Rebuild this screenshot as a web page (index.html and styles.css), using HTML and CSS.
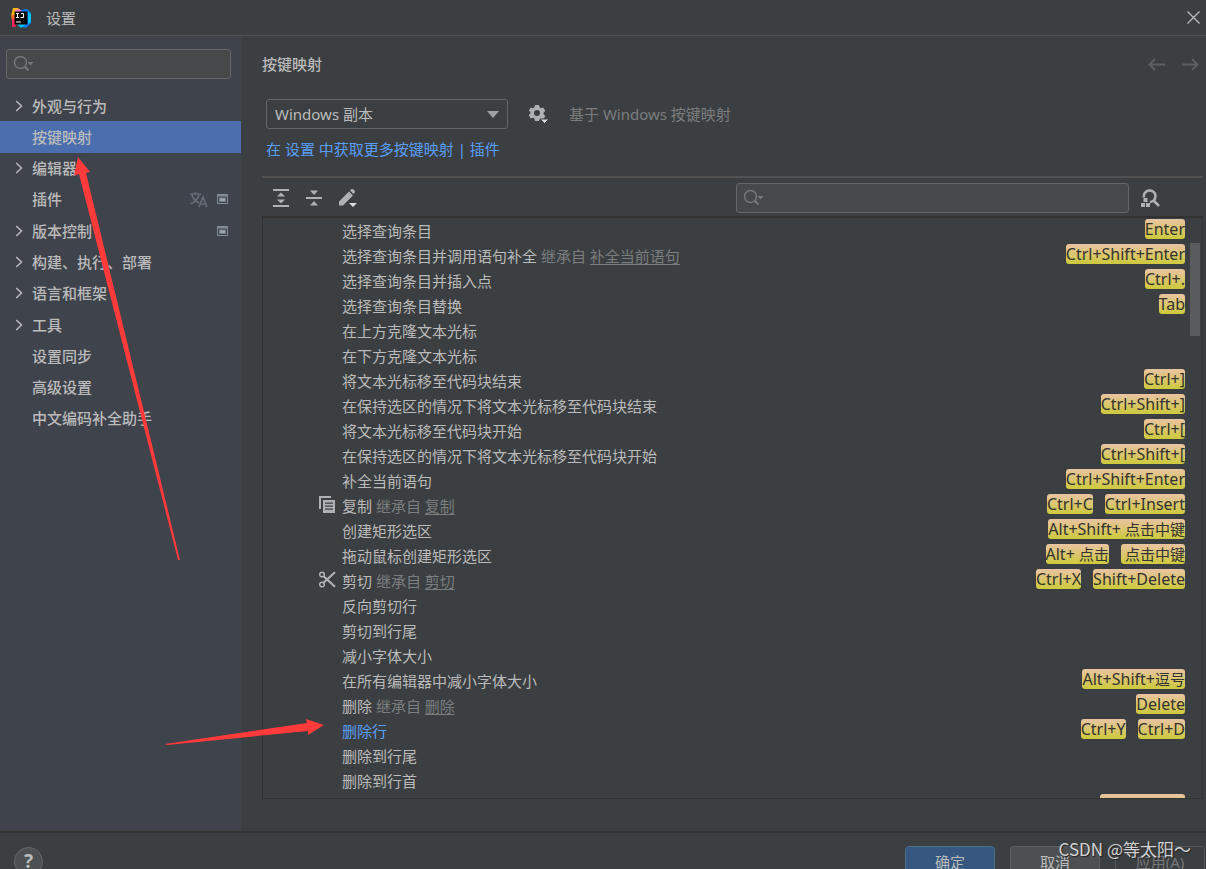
FILE: index.html
```html
<!DOCTYPE html>
<html lang="zh-CN">
<head>
<meta charset="utf-8">
<title>设置</title>
<link rel="stylesheet" href="styles.css">
</head>
<body>
<svg class="defs" aria-hidden="true">
  <symbol id="search" viewBox="0 0 22 18"><circle cx="7.5" cy="7.5" r="6" fill="none" stroke="currentColor" stroke-width="1.4"/><path d="M11.8 11.8 15.5 15.5" stroke="currentColor" stroke-width="2"/><path d="M14.500 7h6l-3 3.400z" fill="currentColor"/></symbol>
  <symbol id="chevron" viewBox="0 0 8 12"><path d="M1.200 1 6.500 6l-5.300 5" fill="none" stroke="currentColor" stroke-width="1.600"/></symbol>
  <symbol id="project" viewBox="0 0 11 10"><path d="M0 0h11v10H0zM1 2.500v6.500h9V2.500z" fill="#818c96" fill-rule="evenodd"/><path d="M2 3.500h7v4.500H2z" fill="#727c86"/><path d="M3 4.200h5v2.800H3z" fill="#9ba5ae"/></symbol>
</svg>
<div class="app">
  <header class="titlebar">
    <svg class="logo" viewBox="0 0 20 20" aria-hidden="true"><path d="M2 0h5l3 3-4 8-6-3z" fill="#fdb60d"/><path d="M0 7h7v7l-6-1z" fill="#f36a2d"/><path d="M1 11h8l-5 8-3 0z" fill="#fe2857"/><path d="M4 2l4-1 5 3-7 6z" fill="#f77ccb"/><path d="M10 2l6-1 4 4v10l-5 5-8-2z" fill="#087cfa"/><path d="M17 4l3 2v8l-3 2z" fill="#07c3f2"/><path d="M6 16h9l-5 4z" fill="#07c3f2"/><path d="M3.500 3.500h13v13h-13z" fill="#080808"/><path d="M5 5.500h3M6.500 5.500v4M5 9.500h3M10 5.500h2.500v4h-3M5 14h5" fill="none" stroke="#fff"/></svg>
    <h1 class="window-title">设置</h1>
    <button class="icon-btn close" aria-label="关闭"><svg width="13" height="13" viewBox="0 0 13 13"><path d="M.5.5l12 12M12.500.5l-12 12" stroke="#bbb" stroke-width="1.300"/></svg></button>
  </header>
  <div class="body">
    <aside class="sidebar">
      <label class="search"><svg class="search-icon"><use href="#search"/></svg><input type="text" aria-label="搜索设置"></label>
      <nav>
        <ul class="menu">
          <li><a href="#"><svg class="chevron"><use href="#chevron"/></svg>外观与行为</a></li>
          <li><a href="#" class="selected" aria-current="page">按键映射</a></li>
          <li><a href="#"><svg class="chevron"><use href="#chevron"/></svg>编辑器</a></li>
          <li><a href="#">插件<span class="marks"><svg width="18" height="17" viewBox="0 0 18 17" fill="none" stroke="#656c74" stroke-width="1.700"><path d="M0 3h11M5.500 1v2M2 4c1 3.500 4 6.500 7 8M9 4c-1 4-4 7-8.500 9M9 16l4-10 4 10M10.500 13h5"/></svg><svg class="project"><use href="#project"/></svg></span></a></li>
          <li><a href="#"><svg class="chevron"><use href="#chevron"/></svg>版本控制<span class="marks"><svg class="project"><use href="#project"/></svg></span></a></li>
          <li><a href="#"><svg class="chevron"><use href="#chevron"/></svg>构建、执行、部署</a></li>
          <li><a href="#"><svg class="chevron"><use href="#chevron"/></svg>语言和框架</a></li>
          <li><a href="#"><svg class="chevron"><use href="#chevron"/></svg>工具</a></li>
          <li><a href="#">设置同步</a></li>
          <li><a href="#">高级设置</a></li>
          <li><a href="#">中文编码补全助手</a></li>
        </ul>
      </nav>
    </aside>
    <main class="content">
      <div class="heading">
        <h2>按键映射</h2>
        <div class="history">
          <button class="icon-btn" aria-label="后退"><svg width="17" height="13" viewBox="0 0 17 13"><path d="M7 1 1.500 6.500 7 12M2 6.500h15" fill="none" stroke="#5c5e60" stroke-width="2"/></svg></button>
          <button class="icon-btn" aria-label="前进"><svg width="17" height="13" viewBox="0 0 17 13"><path d="M10 1l5.500 5.500L10 12M15 6.500H0" fill="none" stroke="#5c5e60" stroke-width="2"/></svg></button>
        </div>
      </div>
      <div class="scheme">
        <div class="select-wrap">
          <select aria-label="按键映射方案"><option>Windows 副本</option></select>
          <svg class="select-arrow" width="12" height="7" viewBox="0 0 12 7"><path d="M0 0h12L6 7z" fill="#9fa1a3"/></svg>
        </div>
        <button class="icon-btn" aria-label="方案操作"><svg width="21" height="20" viewBox="0 0 21 20"><path d="M7 1h4l.5 2.300 1.600.9 2.200-.7 2 3.400-1.700 1.600v1.900l1.700 1.600-2 3.400-2.200-.7-1.600.9L11 17H7l-.5-2.300-1.600-.9-2.200.7-2-3.400 1.700-1.600V7.600L.7 6.900l2-3.400 2.200.7 1.600-.9zM9 6a3 3 0 1 0 0 6 3 3 0 0 0 0-6z" fill="#afb1b3" fill-rule="evenodd"/><path d="M12 15h9l-4.500 4.500z" fill="#d8d8d8" stroke="#3c3f41"/></svg></button>
        <span class="based-on">基于 Windows 按键映射</span>
      </div>
      <p class="more"><a href="#">在 设置 中获取更多按键映射 | 插件</a></p>
      <div class="toolbar">
        <button class="icon-btn" aria-label="全部展开"><svg width="16" height="18" viewBox="0 0 16 18" fill="#afb1b3"><path d="M0 0h16v2H0zM0 16h16v2H0zM8 3.500l4 4H4zM8 14.500l4-4H4z"/></svg></button>
        <button class="icon-btn" aria-label="全部折叠"><svg width="16" height="18" viewBox="0 0 16 18" fill="#afb1b3"><path d="M0 8h16v2H0zM8 6l4-4.500H4zM8 12l4 4.500H4z"/></svg></button>
        <button class="icon-btn" aria-label="编辑快捷键"><svg width="18" height="18" viewBox="0 0 18 18"><path d="M0 12.500 10 2.500l4 4-10 10H0zM11 1.500l1-1c1-1 2-.5 3 .5s1.500 2 .5 3l-1 1z" fill="#afb1b3"/><path d="M10 14h8l-4 4z" fill="#ddd"/></svg></button>
        <label class="search shortcut-search"><svg class="search-icon"><use href="#search"/></svg><input type="text" aria-label="搜索操作"></label>
        <button class="icon-btn" aria-label="按快捷键查找"><svg width="19" height="18" viewBox="0 0 19 18"><path d="M3 8.500A5.800 5.800 0 1 1 9 13M12.500 11.500 18 17" fill="none" stroke="#afb1b3" stroke-width="2.500"/><path d="M2.500 9h4v4h-4zM0 14h4v4H0zM5 14h4v4H5z" fill="#afb1b3"/></svg></button>
      </div>
      <div class="actions">
        <ul class="rows">
          <li><span class="name">选择查询条目</span><kbd>Enter</kbd></li>
          <li><span class="name">选择查询条目并调用语句补全 <i>继承自 <a href="#">补全当前语句</a></i></span><kbd>Ctrl+Shift+Enter</kbd></li>
          <li><span class="name">选择查询条目并插入点</span><kbd>Ctrl+.</kbd></li>
          <li><span class="name">选择查询条目替换</span><kbd>Tab</kbd></li>
          <li><span class="name">在上方克隆文本光标</span></li>
          <li><span class="name">在下方克隆文本光标</span></li>
          <li><span class="name">将文本光标移至代码块结束</span><kbd>Ctrl+]</kbd></li>
          <li><span class="name">在保持选区的情况下将文本光标移至代码块结束</span><kbd>Ctrl+Shift+]</kbd></li>
          <li><span class="name">将文本光标移至代码块开始</span><kbd>Ctrl+[</kbd></li>
          <li><span class="name">在保持选区的情况下将文本光标移至代码块开始</span><kbd>Ctrl+Shift+[</kbd></li>
          <li><span class="name">补全当前语句</span><kbd>Ctrl+Shift+Enter</kbd></li>
          <li><svg class="row-icon" viewBox="0 0 17 17"><path d="M0 0h12v2H2v11H0z" fill="#afb1b3"/><path d="M4 4h12v13H4zM6 6.500v1.200h8V6.500zM6 9.500v1.200h8V9.500zM6 12.500v1.200h8v-1.200z" fill="#afb1b3" fill-rule="evenodd"/></svg><span class="name">复制 <i>继承自 <a href="#">复制</a></i></span><kbd>Ctrl+C</kbd><kbd>Ctrl+Insert</kbd></li>
          <li><span class="name">创建矩形选区</span><kbd>Alt+Shift+ <span>点击中键</span></kbd></li>
          <li><span class="name">拖动鼠标创建矩形选区</span><kbd>Alt+ <span>点击</span></kbd><kbd class="mouse"><span>点击中键</span></kbd></li>
          <li><svg class="row-icon" viewBox="0 0 17 17" fill="none" stroke="#afb1b3"><circle cx="3" cy="3.500" r="2.300" stroke-width="1.500"/><circle cx="3" cy="13.500" r="2.300" stroke-width="1.500"/><path d="M4.500 5.200 16 15.800M4.500 11.800 16 1.200" stroke-width="2.200"/></svg><span class="name">剪切 <i>继承自 <a href="#">剪切</a></i></span><kbd>Ctrl+X</kbd><kbd>Shift+Delete</kbd></li>
          <li><span class="name">反向剪切行</span></li>
          <li><span class="name">剪切到行尾</span></li>
          <li><span class="name">减小字体大小</span></li>
          <li><span class="name">在所有编辑器中减小字体大小</span><kbd>Alt+Shift+<span>逗号</span></kbd></li>
          <li><span class="name">删除 <i>继承自 <a href="#">删除</a></i></span><kbd>Delete</kbd></li>
          <li><span class="name changed">删除行</span><kbd>Ctrl+Y</kbd><kbd>Ctrl+D</kbd></li>
          <li><span class="name">删除到行尾</span></li>
          <li><span class="name">删除到行首</span></li>
          <li><span class="name"></span><kbd class="partial"></kbd></li>
        </ul>
        <div class="thumb"></div>
      </div>
    </main>
  </div>
  <footer class="footer">
    <button class="help" aria-label="帮助">?</button>
    <button class="btn primary">确定</button>
    <button class="btn">取消</button>
    <button class="btn disabled" disabled>应用(A)</button>
  </footer>
  <svg class="arrows" viewBox="0 0 1206 869" aria-hidden="true"><path d="M78 157 90 172 86 173 180 560 178 560 79 174 74 175.500z" fill="#ff3a3a"/><path d="M165 744 307 723 306 719 324 725 308 735 308 731 167 745z" fill="#ff3a3a"/></svg>
  <div class="watermark">CSDN @等太阳～</div>
</div>
</body>
</html>
```
FILE: styles.css
```css
* { box-sizing: border-box; }
body {
  margin: 0;
  background: #3c3f41;
  color: #bbbbbb;
  font: 15px/20px "Noto Sans", "Noto Sans CJK SC", sans-serif;
}
ul { list-style: none; margin: 0; padding: 0; }
h1, h2, p { margin: 0; font-size: 15px; }
a { color: inherit; text-decoration: none; }
button, input, select { font: inherit; color: inherit; }
.defs { position: absolute; width: 0; height: 0; }
.app { position: relative; display: flex; flex-direction: column; height: 100vh; overflow: hidden; }

.titlebar { display: flex; align-items: center; flex: 0 0 36px; padding: 0 6px 0 11px; border-bottom: 1px solid #515456; }
.logo { width: 20px; height: 20px; }
.window-title { margin-left: 15px; font-weight: 400; }
.icon-btn { display: flex; padding: 0; border: 0; background: none; }
.close { margin-left: auto; }

.body { display: flex; flex: 1; min-height: 0; }
.sidebar { flex: 0 0 241px; min-width: 0; padding-top: 13px; background: #3f434c; }
.search { display: flex; align-items: center; height: 30px; padding: 0 6px; border: 1px solid #646667; border-radius: 3px; background: #45494a; }
.search input { flex: 1; width: 0; min-width: 0; border: 0; padding: 0; background: none; outline: 0; }
.search-icon { flex: none; width: 22px; height: 18px; color: #74797d; }
.sidebar .search { margin: 0 10px 0 6px; }
.menu { display: grid; grid-template-rows: repeat(11, 1fr); height: 344px; margin-top: 11px; }
.menu a { position: relative; display: flex; align-items: center; height: 100%; padding: 0 13px 0 32px; font-weight: 500; }
.menu .selected { background: #4b6eaf; }
.chevron { position: absolute; left: 15px; width: 8px; height: 12px; color: #b4b6b8; }
.marks { display: flex; align-items: center; gap: 9px; margin-left: auto; }
.project { width: 11px; height: 10px; }

.content { display: flex; flex-direction: column; flex: 1; min-width: 0; padding: 18px 3px 32px 21px; }
.heading { display: flex; align-items: center; justify-content: space-between; padding-right: 4px; }
.heading h2 { font-weight: 500; }
.history { display: flex; gap: 17px; }
.scheme { display: flex; align-items: center; gap: 20px; margin: 25px 0 0 4px; }
.select-wrap { position: relative; flex: 0 0 242px; }
.select-wrap select { width: 100%; height: 30px; padding: 0 8px; border: 1px solid #646667; border-radius: 3px; background: #3c3f41; appearance: none; }
.select-arrow { position: absolute; right: 9px; top: 12px; pointer-events: none; }
.based-on { color: #7b7d7e; }
.more { margin: 10px 0 17px 4px; color: #589df6; }
.toolbar { display: flex; align-items: center; flex: 0 0 40px; gap: 17px; padding: 2px 43px 0 11px; border-top: 2px solid #515151; }
.shortcut-search { flex: 0 1 393px; margin-left: auto; margin-right: -5px; }

.actions { position: relative; flex: 1; min-height: 0; overflow: hidden; border: 1px solid #323232; border-top-width: 2px; }
.rows li { position: relative; display: flex; align-items: center; gap: 12px; height: 25px; padding: 0 17px 0 79px; }
.rows { margin-top: -1px; }
.name { flex: 1; padding-top: 3px; }
.name i { font-style: normal; color: #7b7d7e; }
.name i a { text-decoration: underline; text-underline-offset: 2px; }
.changed { color: #589df6; }
.row-icon { position: absolute; left: 56px; top: 4px; width: 17px; height: 17px; }
kbd { height: 20px; margin-bottom: 2px; border-radius: 3px; background: linear-gradient(#e9c3a2, #cdc93b); color: #33332f; font: 16px/20px "Noto Sans", "Noto Sans CJK SC", sans-serif; white-space: nowrap; }
kbd span { font-size: 15px; }
.mouse { padding-left: 4px; }
.partial { width: 85px; }
.thumb { position: absolute; right: 2px; top: 25px; width: 10px; height: 93px; background: #595b5d; }

.footer { display: flex; align-items: flex-start; flex: 0 0 38px; gap: 15px; padding: 13px 1px 0 14px; overflow: hidden; border-top: 2px solid #323232; }
.help { width: 29px; height: 29px; margin: 1px auto 0 0; padding: 0; border: 1px solid #65686a; border-radius: 50%; background: #4c5052; font-size: 19px; font-weight: 700; line-height: 27px; }
.btn { width: 90px; height: 32px; padding: 0; border: 1px solid #5e6060; border-radius: 4px; background: #4c5052; }
.primary { border-color: #4c708c; background: #365880; }
.disabled { border-color: #55585a; background: none; color: #777777; }
.arrows { position: absolute; left: 0; top: 0; width: 1206px; height: 869px; pointer-events: none; }
.watermark { position: absolute; right: 15px; bottom: 8px; color: #d2d3d4; font: 17px/24px "Noto Sans CJK SC", sans-serif; text-shadow: 1px 1px 1px #222222; }
```
